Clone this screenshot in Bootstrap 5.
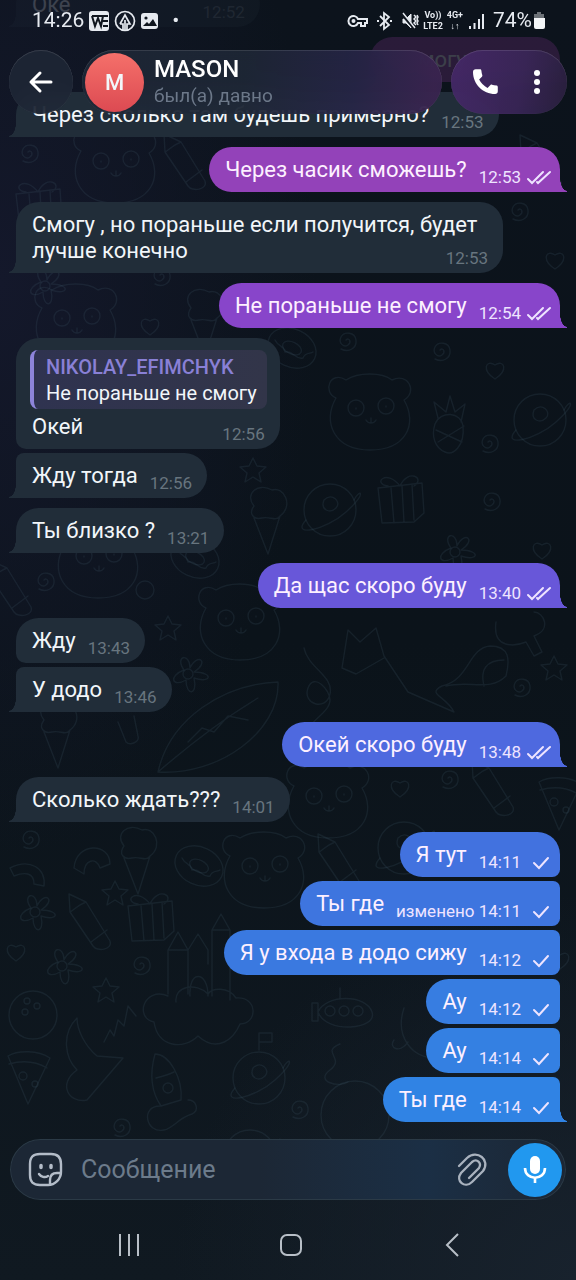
<!DOCTYPE html>
<html lang="ru">
<head>
<meta charset="utf-8">
<meta name="viewport" content="width=device-width, initial-scale=1">
<title>MASON</title>
<link href="https://cdn.jsdelivr.net/npm/bootstrap@5.3.0/dist/css/bootstrap.min.css" rel="stylesheet">
<style>
  body {
    font-family: Roboto, "Noto Sans", sans-serif;
    background:
      radial-gradient(ellipse 55% 45% at 0 22%, #14182b, transparent),
      radial-gradient(ellipse 70% 30% at 100% 100%, #18222d, transparent),
      linear-gradient(180deg, #0c131c, #0b131a 50%, #101921);
    color: #f2f6fa;
  }
  button { color: inherit; }
  .wallpaper { z-index: -1; fill: none; stroke: #4a6272; stroke-opacity: .18; stroke-width: 1.4; stroke-linecap: round; stroke-linejoin: round; }

  /* status bar and floating header */
  .status-bar { height: 50px; padding: 0 30px 8px 32px; font-size: 21px; color: #e6eaf0; }
  .status-bar .tiny { font-size: 9px; line-height: 11px; font-weight: 700; }
  .chat-header { gap: 9px; padding: 0 9px; }
  .glass {
    height: 64px; border: 0; border-radius: 32px;
    background: rgba(30, 39, 54, .86);
    box-shadow: inset 0 1px 0 rgba(255, 255, 255, .1), inset 0 0 1px rgba(255, 255, 255, .14);
    backdrop-filter: blur(14px);
  }
  .glass-back { width: 64px; }
  .glass-peer { padding: 0 3px; gap: 10px; background: linear-gradient(95deg, rgba(30, 39, 54, .9) 45%, rgba(38, 37, 70, .92) 75%, rgba(58, 36, 80, .92) 97%); }
  .glass-tools { width: 116px; gap: 32px; padding-right: 8px; background: linear-gradient(100deg, rgba(70, 40, 105, .92), rgba(58, 38, 88, .92) 60%, rgba(42, 32, 62, .92)); }
  .avatar { width: 59px; height: 59px; font-size: 22px; font-weight: 500; background: linear-gradient(#f5706a, #dc4a52); }
  .peer-name { font-size: 24px; line-height: 28px; font-weight: 500; color: #fff; }
  .peer-seen { font-size: 19px; line-height: 26px; color: #6c7889; }

  /* messages */
  .chat-log { gap: 10px; padding: 0 16px; margin-bottom: 17px; min-height: 0; }
  .run { gap: 4px; }
  .bubble {
    --fill: #212d39;
    position: relative; max-width: calc(100% - 57px); padding: 10px 15px 9px 16px;
    background: var(--fill); border-radius: 23px;
    font-size: 22px; line-height: 26px;
  }
  .stamp { float: right; margin: 10px 0 -6px 12px; font-size: 17px; line-height: 20px; color: #68757f; }
  .bubble.sent { padding-right: 8px; color: #fdf0ff; }
  .sent .stamp { color: #eee4ff; }
  .stamp svg { width: 26px; height: 18px; margin-left: 5px; vertical-align: -3px; fill: none; stroke: currentColor; stroke-width: 2; stroke-linecap: round; }
  .got.joined-top { border-top-left-radius: 8px; }
  .got.joined-bottom { border-bottom-left-radius: 10px; }
  .sent.joined-top { border-top-right-radius: 7px; }
  .sent.joined-bottom { border-bottom-right-radius: 8px; }
  .tail.got { border-bottom-left-radius: 0; }
  .tail.sent { border-bottom-right-radius: 0; }
  .tail::after { content: ""; position: absolute; bottom: 0; width: 7px; height: 14px; }
  .tail.got::after { right: 100%; background: radial-gradient(ellipse 7px 13px at 0 0, transparent 96%, var(--fill)); }
  .tail.sent::after { left: 100%; background: radial-gradient(ellipse 7px 13px at 100% 0, transparent 96%, var(--fill)); }
  .faded { opacity: .2; }
  .faded-long { min-width: 190px; text-align: right; }
  .quote { margin: 2px -2px 5px; padding: 4px 10px 3px 12px; border-left: 4px solid #8d84da; border-radius: 8px; background: linear-gradient(90deg, #2f3350, #323549); font-size: 20px; }
  .quote strong { font-weight: 500; color: #8980d6; }

  /* composer and system navigation */
  .composer { height: 61px; margin: 0 10px; padding: 0 4px 0 18px; border-radius: 31px; background: #1c2735; background-image: linear-gradient(90deg, transparent 45%, #1b2f45 75%, transparent 98%); box-shadow: inset 0 0 0 1px #2b3a46; }
  .composer input, .composer input:focus { color: #fff; font-size: 25px; background: none; border: 0; box-shadow: none; padding: 0 18px; }
  .composer input::placeholder { color: #6c7b8b; }
  .mic { width: 54px; height: 54px; background: #2198ef; margin-left: 20px; }
  .sys-nav { height: 80px; padding: 10px 43px 0 48px; color: #b8bfc7; }
</style>
</head>
<body class="vh-100 d-flex flex-column overflow-hidden position-relative">

<svg class="wallpaper position-absolute top-0 start-0 w-100 h-100" viewBox="0 0 576 1280" preserveAspectRatio="xMidYMid slice" aria-hidden="true">
  <defs>
    <path id="star" d="M0-12 4-4 13-3 6 3 8 12 0 7-8 12-6 3-13-3-4-4z"/>
    <path id="swirl" d="M0 0c3-3 6 2 2 5s-10-2-7-8 14-5 15 3-7 13-15 9"/>
    <path id="heart" d="M0 9C-14 0-9-11 0-5 9-11 14 0 0 9z"/>
    <g id="bear"><path d="M-34-14c-14-6-6-28 10-18 12-8 36-8 46 0 16-8 26 12 12 20 14 24 2 50-34 50s-48-28-34-52z"/><circle cx="-14" cy="-4" r="8"/><circle cx="16" cy="-6" r="8"/><path d="M-4 8c2 4 8 4 10 0M1 6v4M-14-4v1M16-6v1"/></g>
    <g id="donut"><ellipse rx="25" ry="19" transform="rotate(25)"/><ellipse rx="10" ry="6" transform="rotate(25)"/><path d="M-17-8c4 8 8 4 10 12 8-2 10 8 18 6 2-6 8-4 10-6"/></g>
    <g id="gift"><path d="M-22-12 22-17l2 30-10 9-32 1z M-9-12-6 23M2-14 4 22M12-16l2 36M0-14c-14-18-28-2-12 0M0-14c8-18 26-8 14 0"/></g>
    <g id="pencil"><path d="M-20-30-19-12 4 22c4 6 20 4 17-5L-3-22z M-19-12c4-2 6-6 16-10M2 18 18 6"/></g>
    <g id="planet"><circle r="26"/><path d="M-24 10c-16 18 20 10 40-8 22-20 14-24 8-12M-6-10c8-8 18 2 12 8s-16 2-12-8"/></g>
    <g id="castle"><path d="M-36 38v-44l10-18 10 18v44M-16 8v-14l10-16 10 16v14M8 40v-66l9-16 9 16v70M-36-6h20M8-26h18M-14 40c-2-26 18-26 18 0M-36 40c-24-10-34 22-14 26 4 26 30 28 44 14 20 18 36 2 42-12 18 0 18-28-4-26-8-12-24-10-28-4-12-12-34-8-32 8"/></g>
    <g id="pizza"><path d="M-21-18c10-6 30-6 42 2L-1 30z M-20-10c14-4 28-2 38 4"/><circle cx="-6" cy="2" r="4"/><circle cx="6" cy="10" r="3"/></g>
    <g id="fox"><path d="M-70 14-64-24l12 12 16-14 8 28 24 36 46 20c-8-16-28-18-12-26 28-6 26-38 48-40 20 0 20 14 16 30-16 16-36 4-60 10M-70 14l14 6 28-16M92 6c-18 0-24 10-20 26"/></g>
    <path id="leaf" d="M-60 44C-48-10 6-44 60-46 62 4 0 48-60 44zM-60 44C-30 18 0-6 40-30M-30 14l14-14 12 4 14-16 20 4"/>
    <g id="cone"><path d="M-12 0 2 36 14-2c14-10 4-30-8-26-14-8-28 4-18 16-6 8 0 14 8 12s14 4 18-2"/></g>
    <g id="flower"><circle r="5"/><path d="M-4-4c-10-14 6-18 6-2 8-16 20-6 4 4 20 0 18 12 0 6 4 18-8 18-8 2-14 8-18-4-2-10"/></g>
    <g id="rocket"><path d="M-13-32c14 0 28 24 26 46l-20 6C-18 4-18-14-13-32zM-12-8c8-2 14-4 18-6M-8 20c-20 0-14 28 4 24 10-2 14-12 28-16 8-4 4-14-4-14"/><circle cy="2" r="5"/></g>
  </defs>
  <use href="#bear" x="115" y="165"/><use href="#gift" x="38" y="206"/><use href="#pencil" x="184" y="164"/>
  <use href="#swirl" x="28" y="152"/><use href="#swirl" x="160" y="275"/><use href="#bear" x="76" y="322"/><use href="#heart" x="150" y="326"/><use href="#cone" x="203" y="320"/>
  <use href="#flower" x="45" y="286"/><use href="#swirl" x="518" y="210"/><use href="#heart" x="555" y="260"/><use href="#pencil" x="540" y="165"/>
  <use href="#swirl" x="346" y="340"/><use href="#swirl" x="440" y="350"/><use href="#bear" x="370" y="412"/><use href="#donut" x="292" y="348"/>
  <g transform="translate(450 430)"><path d="M-15-6c6-14 26-12 28 2 2 20-10 30-18 26-10-4-14-16-10-28zM-12-12-16-28l12 10 4-16 5 16 10-8-4 18M-14 0 12 12M-12 12 14-4"/></g>
  <use href="#planet" x="540" y="420"/><use href="#heart" x="495" y="370"/><use href="#swirl" x="488" y="442"/>
  <use href="#cone" x="266" y="518"/><use href="#star" x="253" y="470"/><use href="#donut" x="195" y="558"/><use href="#bear" x="98" y="560"/>
  <use href="#pencil" x="10" y="590"/><use href="#swirl" x="44" y="580"/><circle cx="145" cy="590" r="9"/><use href="#star" x="168" y="628"/><use href="#bear" x="240" y="622"/>
  <use href="#planet" x="330" y="510"/><use href="#flower" x="455" y="552"/><use href="#gift" x="400" y="500"/><use href="#heart" x="542" y="550"/><use href="#swirl" x="490" y="500"/>
  <use href="#fox" x="412" y="654"/><path d="M304 648c4 20 30 28 26 46s-28 10-22-6 22 2 22 12-14 18-18 24M496 622c-4 28 20 24 30 20l8 14 8-4-8-16c18-6 10-24 0-24"/>
  <use href="#star" x="554" y="668"/><use href="#swirl" x="520" y="686"/><use href="#flower" x="188" y="674"/><use href="#leaf" x="218" y="728"/><use href="#cone" x="56" y="732"/><path d="m118 722 8 20c4 4 14 0 12-6l-4-20"/>
  <use href="#bear" x="328" y="800"/><use href="#heart" x="400" y="788"/><use href="#swirl" x="448" y="778"/><use href="#pizza" x="560" y="800"/><use href="#pencil" x="492" y="790"/>
  <use href="#swirl" x="29" y="838"/><path d="M10 868c20-10 36 0 34 18l-10-2c0-12-10-12-20-8zM74 868c2-26 36-26 36-4l-10 4c-4-12-16-8-16 6z"/><use href="#cone" x="136" y="858"/><use href="#donut" x="199" y="866"/><use href="#bear" x="264" y="870"/>
  <use href="#pencil" x="89" y="924"/><use href="#gift" x="150" y="918"/><use href="#star" x="115" y="893" /><use href="#flower" x="35" y="912"/><use href="#pencil" x="338" y="864"/><use href="#planet" x="404" y="848"/>
  <use href="#heart" x="16" y="952"/><use href="#flower" x="62" y="966"/><use href="#swirl" x="140" y="964"/><use href="#star" x="106" y="990"/><use href="#castle" x="204" y="956"/>
  <circle cx="33" cy="1015" r="24"/><circle cx="27" cy="1001" r="3"/><circle cx="37" cy="1006" r="3"/><circle cx="25" cy="1012" r="3"/>
  <use href="#pizza" x="29" y="1074"/><path d="M77 1018c-16 16-12 40 0 52-20 14-8 34 10 30l36-42-26-2c-12-10-20-26-20-38M104 1042l6-12 4 6 4-16 6 6 4-20 8 10"/><use href="#rocket" x="168" y="1086"/><use href="#planet" x="259" y="1078"/><path d="M259 1050v-17h13v9h-13"/>
  <path d="M318 1012c8-18 48-18 54 0s-46 22-54 0zM312 1003v18h6v-18zM340 998v-10M340 1044c-20 8 6 14-10 26s10 18 18 12"/><circle cx="330" cy="1011" r="5"/><circle cx="344" cy="1011" r="5"/><circle cx="358" cy="1011" r="5"/>
  <path d="M404 1008c-10 30 10 50 30 50M394 1040c-6 8 6 14 14 2"/><circle cx="355" cy="1115" r="34"/><use href="#swirl" x="298" y="1108"/><use href="#heart" x="560" y="960"/><use href="#planet" x="250" y="1156"/><use href="#swirl" x="120" y="1126"/>
</svg>

<header class="fixed-top">
  <div class="status-bar d-flex align-items-center">
    <span>14:26</span>
    <svg class="ms-1" width="22" height="22" viewBox="0 0 22 22" aria-hidden="true"><rect x="1" y="1" width="20" height="20" rx="3" fill="#e6eaf0"/><path d="M4 6l3 10 3-8 3 8 2-10M4 6h16M14 11h6M15 16h5" fill="none" stroke="#10161f" stroke-width="2"/></svg>
    <svg class="ms-1" width="22" height="22" viewBox="0 0 22 22" fill="none" stroke="#e6eaf0" stroke-width="1.700" aria-hidden="true"><circle cx="11" cy="11" r="9.500"/><path d="M6 14l5-9 5 9h-3v6M6 14h3v6M11 10v10"/></svg>
    <svg class="ms-1" width="20" height="20" viewBox="0 0 20 20" aria-hidden="true"><rect x="1" y="2" width="17" height="16" rx="3" fill="#e6eaf0"/><circle cx="6" cy="7" r="1.6" fill="#10161f"/><path d="M3 15l4-4 2 2 4-5 4 7z" fill="#10161f"/></svg>
    <span class="ms-2 ps-1">•</span>
    <svg class="ms-auto" width="21" height="16" viewBox="0 0 21 16" fill="none" stroke="#e6eaf0" stroke-width="2" aria-hidden="true"><path d="M11 6a5 5 0 1 0 0 4h3v3h4v-3h2V6z"/><circle cx="6.500" cy="8" r="1"/></svg>
    <svg class="ms-2" width="17" height="20" viewBox="0 0 15 20" fill="none" stroke="#e6eaf0" stroke-width="1.800" aria-hidden="true"><path d="M3 5l9 9-5 4V2l5 4-9 9M0 10h2M13 10h2"/></svg>
    <svg class="ms-2" width="18" height="20" viewBox="0 0 18 20" fill="#e6eaf0" stroke="#e6eaf0" aria-hidden="true"><path d="M2 8h3l5-5v14l-5-5H2z"/><path d="M1 3l12 14" stroke="#10161f" stroke-width="3"/><path d="M2 2l12 15M13 4l2 2-2 2 2 2-2 2 2 2M16 4l1 2-1 2 1 2-1 2 1 2" fill="none" stroke-width="1.500"/></svg>
    <span class="tiny ms-1 text-center">Vo))<br>LTE2</span>
    <span class="tiny ms-1 text-center">4G+<br>↓↑</span>
    <svg class="mx-1" width="18" height="18" viewBox="0 0 18 18" stroke="#e6eaf0" stroke-width="2" aria-hidden="true"><path d="M3 14v3M7.500 11v6M12 7v10M16 2v15"/></svg>
    <span class="ms-1">74%</span>
    <svg width="14" height="20" viewBox="0 0 14 20" aria-hidden="true"><path d="M5 1h4v2h3v5H2V3h3z" fill="#6c7177"/><path d="M2 7h11v9a2 2 0 0 1-2 2H4a2 2 0 0 1-2-2z" fill="#f4f6f8"/></svg>
  </div>
  <div class="chat-header d-flex">
    <button class="glass glass-back p-0" type="button" aria-label="Назад">
      <svg width="26" height="24" viewBox="0 0 26 24" fill="none" stroke="#fff" stroke-width="3" stroke-linecap="round" stroke-linejoin="round"><path d="M23 12H3M12 3l-9 9 9 9"/></svg>
    </button>
    <div class="glass glass-peer d-flex align-items-center flex-grow-1">
      <div class="avatar rounded-circle d-flex align-items-center justify-content-center">M</div>
      <div>
        <div class="peer-name">MASON</div>
        <div class="peer-seen">был(а) давно</div>
      </div>
    </div>
    <div class="glass glass-tools d-flex align-items-center justify-content-center">
      <button class="btn p-0 border-0" type="button" aria-label="Позвонить">
        <svg width="32" height="32" viewBox="0 0 24 24" fill="#fff"><path d="M5 2.500h3.200c.6 0 1 .4 1.100 1 .1 1.200.3 2.300.7 3.400.1.400 0 .8-.3 1.100L7.600 10.200a15 15 0 0 0 6.300 6.300l2.200-2.200c.3-.3.700-.4 1.100-.3 1.100.4 2.200.6 3.400.6.6 0 1 .5 1 1.100V19c0 1.300-.8 2-2 2C10.300 21 3 13.700 3 4.500c0-1.200.8-2 2-2z"/></svg>
      </button>
      <button class="btn p-0 border-0" type="button" aria-label="Меню">
        <svg width="8" height="26" viewBox="0 0 8 26" fill="#fff"><circle cx="4" cy="4" r="3"/><circle cx="4" cy="13" r="3"/><circle cx="4" cy="22" r="3"/></svg>
      </button>
    </div>
  </div>
</header>

<svg class="d-none" aria-hidden="true">
  <symbol id="read" viewBox="0 0 26 18"><path d="M2 11l4 4L17 4M11 14l1 1L24 4"/></symbol>
  <symbol id="delivered" viewBox="0 0 26 18"><path d="M8 10l5 5L22 5"/></symbol>
</svg>

<main class="chat-log flex-grow-1 d-flex flex-column justify-content-end overflow-hidden">
  <div class="run d-flex flex-column align-items-start">
    <div class="bubble got tail faded">Оке<span class="stamp ps-5"><span class="ps-5 ms-4">12:52</span></span></div>
  </div>
  <div class="run d-flex flex-column align-items-end">
    <div class="bubble sent tail faded faded-long" style="--fill:#a03fae">могу<span class="stamp">12:53<svg><use href="#read"/></svg></span></div>
  </div>
  <div class="run d-flex flex-column align-items-start">
    <div class="bubble got tail">Через сколько там будешь примерно?<span class="stamp">12:53</span></div>
  </div>
  <div class="run d-flex flex-column align-items-end">
    <div class="bubble sent tail" style="--fill:#9342b9">Через часик сможешь?<span class="stamp">12:53<svg><use href="#read"/></svg></span></div>
  </div>
  <div class="run d-flex flex-column align-items-start">
    <div class="bubble got tail">Смогу , но пораньше если получится, будет лучше конечно<span class="stamp">12:53</span></div>
  </div>
  <div class="run d-flex flex-column align-items-end">
    <div class="bubble sent tail" style="--fill:#8845ca">Не пораньше не смогу<span class="stamp">12:54<svg><use href="#read"/></svg></span></div>
  </div>
  <div class="run d-flex flex-column align-items-start">
    <div class="bubble got joined-bottom">
      <div class="quote"><strong>NIKOLAY_EFIMCHYK</strong><br>Не пораньше не смогу</div>
      Окей<span class="stamp">12:56</span>
    </div>
    <div class="bubble got joined-top tail">Жду тогда<span class="stamp">12:56</span></div>
  </div>
  <div class="run d-flex flex-column align-items-start">
    <div class="bubble got tail">Ты близко ?<span class="stamp">13:21</span></div>
  </div>
  <div class="run d-flex flex-column align-items-end">
    <div class="bubble sent tail" style="--fill:#6857d9">Да щас скоро буду<span class="stamp">13:40<svg><use href="#read"/></svg></span></div>
  </div>
  <div class="run d-flex flex-column align-items-start">
    <div class="bubble got joined-bottom">Жду<span class="stamp">13:43</span></div>
    <div class="bubble got joined-top tail">У додо<span class="stamp">13:46</span></div>
  </div>
  <div class="run d-flex flex-column align-items-end">
    <div class="bubble sent tail" style="--fill:#4e69df">Окей скоро буду<span class="stamp">13:48<svg><use href="#read"/></svg></span></div>
  </div>
  <div class="run d-flex flex-column align-items-start">
    <div class="bubble got tail">Сколько ждать???<span class="stamp">14:01</span></div>
  </div>
  <div class="run d-flex flex-column align-items-end">
    <div class="bubble sent joined-bottom" style="--fill:#4272df">Я тут<span class="stamp">14:11<svg><use href="#delivered"/></svg></span></div>
    <div class="bubble sent joined-top joined-bottom" style="--fill:#3e75df">Ты где<span class="stamp">изменено 14:11<svg><use href="#delivered"/></svg></span></div>
    <div class="bubble sent joined-top joined-bottom" style="--fill:#3a79e0">Я у входа в додо сижу<span class="stamp">14:12<svg><use href="#delivered"/></svg></span></div>
    <div class="bubble sent joined-top joined-bottom" style="--fill:#377de1">Ау<span class="stamp">14:12<svg><use href="#delivered"/></svg></span></div>
    <div class="bubble sent joined-top joined-bottom" style="--fill:#3480e2">Ау<span class="stamp">14:14<svg><use href="#delivered"/></svg></span></div>
    <div class="bubble sent joined-top tail" style="--fill:#3083e4">Ты где<span class="stamp">14:14<svg><use href="#delivered"/></svg></span></div>
  </div>
</main>

<footer>
  <form class="composer d-flex align-items-center" onsubmit="return false">
    <button class="btn p-0 border-0" type="button" aria-label="Стикеры">
      <svg width="35" height="35" viewBox="0 0 35 35" fill="none" stroke="#b3bcc8" stroke-width="2.400" stroke-linecap="round" stroke-linejoin="round"><path d="M20 33h-8C5 33 2 30 2 23V12C2 5 5 2 12 2h11c7 0 10 3 10 10v8c0 7-6 13-13 13zM22 32v-4c0-5 2-7 7-7h4M11 22c2 3 6 4 9 2"/><path d="M13 13.500v2M23 13.500v2" stroke-width="3.500"/></svg>
    </button>
    <input class="form-control" type="text" placeholder="Сообщение" aria-label="Сообщение">
    <button class="btn p-0 border-0" type="button" aria-label="Прикрепить">
      <svg width="32" height="34" viewBox="0 0 32 34" fill="none" stroke="#a9b2be" stroke-width="2.300" stroke-linecap="round"><path d="M3 13l8-8c10-9 24 2 16 13L16 29c-7 7-17-1-11-9l11-11c5-4 10 1 7 6L13 25"/></svg>
    </button>
    <button class="btn mic p-0 border-0 rounded-circle flex-shrink-0" type="button" aria-label="Голосовое сообщение">
      <svg width="26" height="30" viewBox="0 0 26 30"><rect x="8" y="1" width="10" height="18" rx="5" fill="#fff"/><path d="M3 13c0 13 20 13 20 0M13 23v5" fill="none" stroke="#fff" stroke-width="2.600"/></svg>
    </button>
  </form>
  <nav class="sys-nav d-flex align-items-center" aria-label="Система">
    <button class="btn border-0 p-0 flex-fill w-100" type="button" aria-label="Недавние"><svg width="22" height="24" viewBox="0 0 22 24" stroke="#b8bfc7" stroke-width="2"><path d="M2 1v22M11 1v22M20 1v22"/></svg></button>
    <button class="btn border-0 p-0 flex-fill w-100" type="button" aria-label="Домой"><svg width="24" height="24" viewBox="0 0 24 24" fill="none" stroke="#b8bfc7" stroke-width="2"><rect x="2" y="2" width="20" height="20" rx="6"/></svg></button>
    <button class="btn border-0 p-0 flex-fill w-100" type="button" aria-label="Назад"><svg width="16" height="24" viewBox="0 0 16 24" fill="none" stroke="#b8bfc7" stroke-width="2"><path d="M14 1L3 12l11 11"/></svg></button>
  </nav>
</footer>

<script src="https://cdn.jsdelivr.net/npm/bootstrap@5.3.0/dist/js/bootstrap.bundle.min.js"></script>
</body>
</html>
